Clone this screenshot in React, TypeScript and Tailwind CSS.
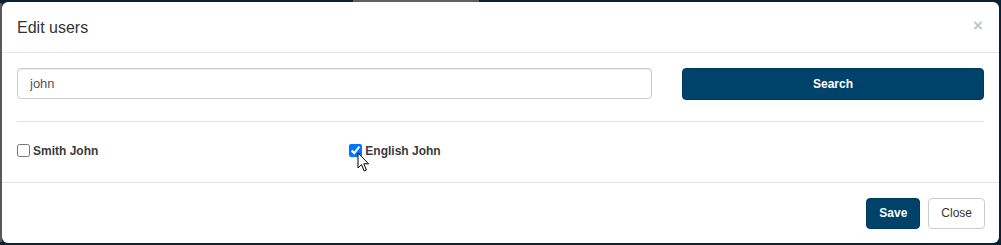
import { useState } from "react";

const users = [
  { id: 1, name: "Smith John", checked: false },
  { id: 2, name: "English John", checked: true },
];

function Cursor() {
  return (
    <svg
      width="14"
      height="21"
      viewBox="0 0 14 21"
      className="absolute left-[357px] top-[152px] pointer-events-none"
    >
      <path
        d="M1 1 L1 16 L4.5 12.6 L7.2 19 L9.4 18 L6.8 11.8 L11.6 11.8 Z"
        fill="#fff"
        stroke="#000"
        strokeWidth="1"
        strokeLinejoin="round"
      />
    </svg>
  );
}

export default function App() {
  const [query, setQuery] = useState("john");
  const [list, setList] = useState(users);

  function toggle(id: number) {
    setList((prev) => prev.map((u) => (u.id === id ? { ...u, checked: !u.checked } : u)));
  }

  return (
    <div
      className="relative w-[1001px] h-[245px] bg-[#0b2132] p-[2px] overflow-hidden"
      style={{ fontFamily: '"Liberation Sans", Arial, sans-serif' }}
    >
      {/* backdrop bits */}
      <div className="absolute left-0 top-[3px] bottom-[3px] w-[2px] bg-[#595959]" />
      <div className="absolute left-[353px] top-0 w-[126px] h-[2px] bg-[#5f5f5f]" />

      {/* Modal */}
      <div className="relative h-full bg-white rounded-[6px] flex flex-col">
        {/* Header */}
        <div className="h-[51px] px-[15px] flex items-center justify-between border-b border-[#e5e5e5]">
          <h4 className="text-[16px] leading-none text-[#333] pt-[1px]">Edit users</h4>
          <button className="text-[#c4c4c4] text-[17px] font-bold leading-none -mt-[4px] mr-[1px]">×</button>
        </div>

        {/* Body */}
        <div className="px-[15px] pt-[15px] pb-[24px] border-b border-[#e5e5e5]">
          <div className="grid grid-cols-[635px_1fr] gap-[30px]">
            <input
              value={query}
              onChange={(e) => setQuery(e.target.value)}
              className="h-[31px] w-full rounded-[4px] border border-[#cccccc] px-[12px] text-[13px] text-[#555] outline-none shadow-[inset_0_1px_1px_rgba(0,0,0,0.075)]"
            />
            <button className="h-[32px] rounded-[4px] bg-[#00436a] border border-[#003a5c] text-white text-[12px] font-bold">
              Search
            </button>
          </div>

          <hr className="mt-[21px] mb-[21px] border-t border-[#e2e2e2]" />

          <div className="grid grid-cols-3 gap-[30px] h-[15px]">
            {list.map((u) => (
              <label key={u.id} className="flex items-center text-[12px] font-bold text-[#3a3a3a] leading-none">
                <input
                  type="checkbox"
                  checked={u.checked}
                  onChange={() => toggle(u.id)}
                  className="m-0 mr-[3px] w-[13px] h-[13px] accent-[#0075ff]"
                />
                {u.name}
              </label>
            ))}
          </div>
        </div>

        {/* Footer */}
        <div className="flex-1 px-[14px] flex items-center justify-end gap-[8px]">
          <button className="h-[31px] px-[12px] rounded-[4px] bg-[#00436a] border border-[#003a5c] text-white text-[12px] font-bold">
            Save
          </button>
          <button className="h-[31px] px-[12px] rounded-[4px] bg-white border border-[#cccccc] text-[#333] text-[12px]">
            Close
          </button>
        </div>
      </div>

      <Cursor />
    </div>
  );
}
